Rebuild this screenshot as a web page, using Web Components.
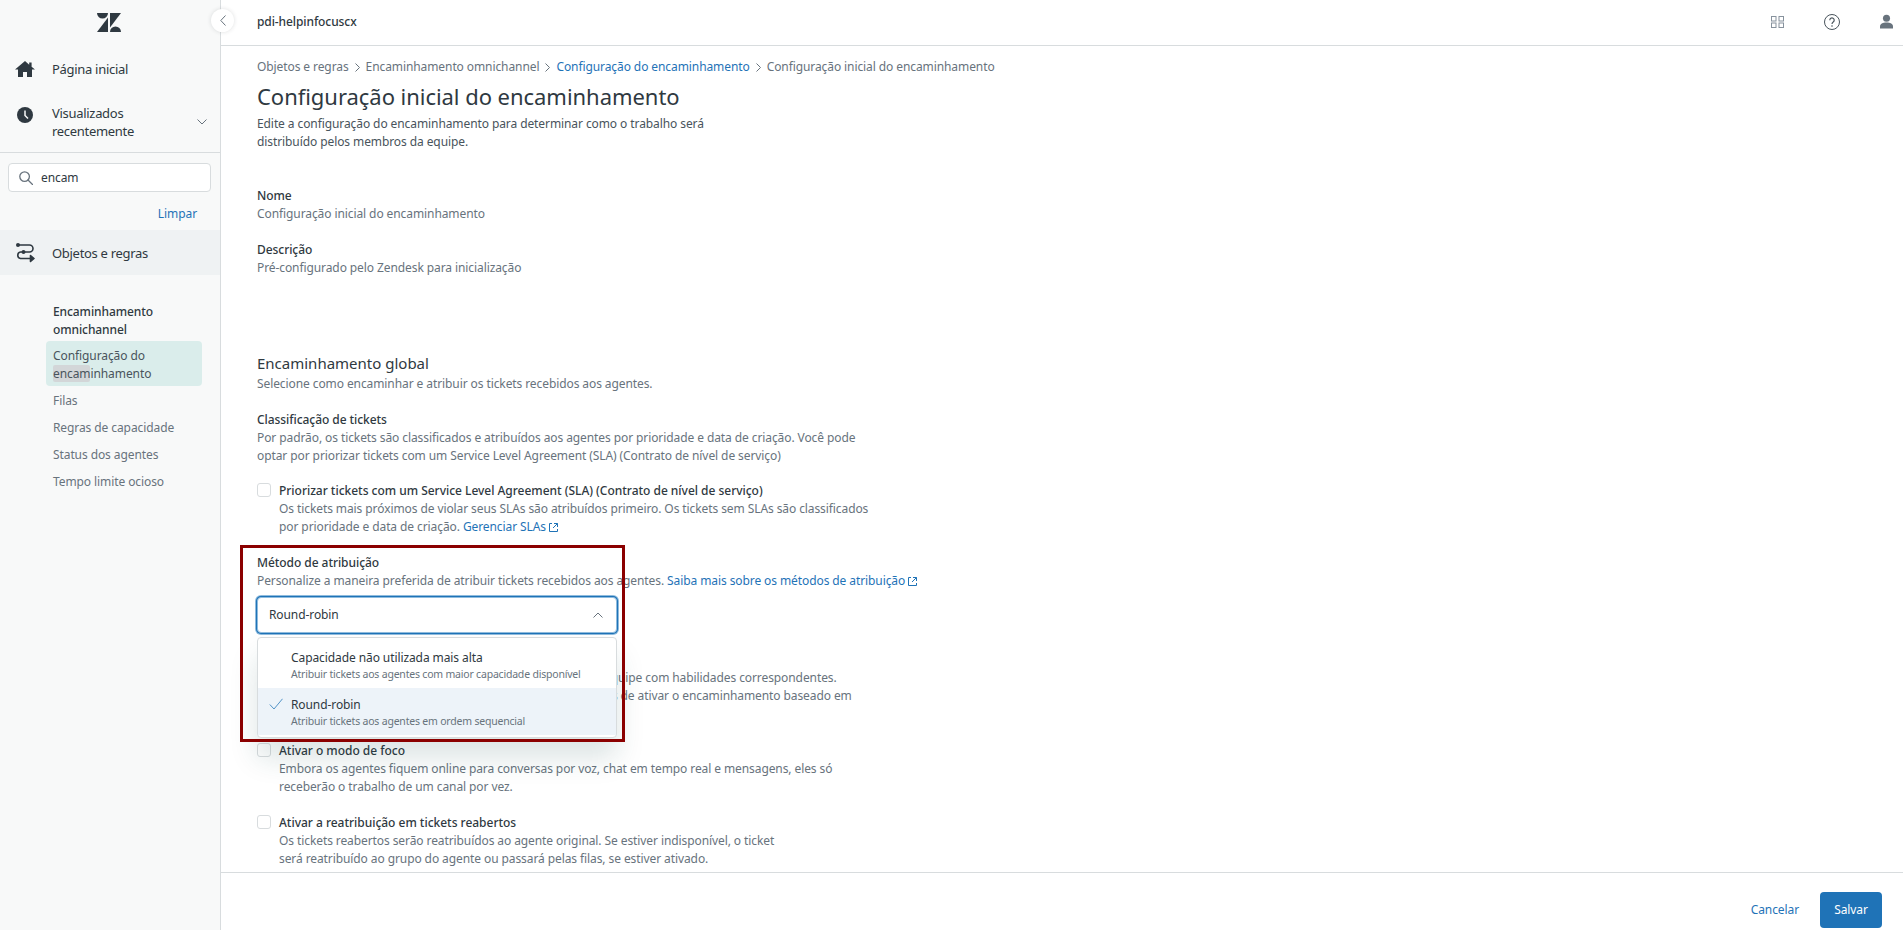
<!DOCTYPE html>
<html lang="pt-BR">
<head>
<meta charset="utf-8">
<title>Configuração inicial do encaminhamento</title>
<style>
  html, body { margin: 0; height: 100%; overflow: hidden; }
  body {
    font-family: "Noto Sans", "Open Sans", sans-serif;
    font-size: 12px;
    letter-spacing: -0.09px;
    line-height: 18px;
    color: #2f3941;
    background: #fff;
  }
</style>
</head>
<body>

<zd-app>
  <zd-sidebar slot="side"></zd-sidebar>
  <zd-header slot="top" account="pdi-helpinfocuscx"></zd-header>
  <zd-routing-page></zd-routing-page>
  <zd-footer slot="bottom"></zd-footer>
</zd-app>

<script>
// helper pra não repetir attachShadow em todo componente
class ZdBase extends HTMLElement {
  constructor() {
    super();
    this.attachShadow({ mode: 'open' });
  }
  connectedCallback() {
    this.shadowRoot.innerHTML = this.markup();
  }
}

class ZdApp extends ZdBase {
  markup() {
    return `
      <style>
        :host { display: grid; grid-template-columns: 221px 1fr; grid-template-rows: 46px 826px 58px; height: 930px; }
        .side { grid-row: 1 / 4; display: block; min-height: 0; position: relative; z-index: 5; }
        .body { display: block; overflow: hidden; min-height: 0; }
      </style>
      <div class="side"><slot name="side"></slot></div>
      <slot name="top"></slot>
      <div class="body"><slot></slot></div>
      <slot name="bottom"></slot>`;
  }
}

class ZdSidebar extends ZdBase {
  markup() {
    return `
      <style>
        :host { display: block; height: 930px; background: #f8f9f9; border-right: 1px solid #d8dcde; box-sizing: border-box; position: relative; font-size: 12px; }
        .logo { display: flex; justify-content: center; padding-top: 13px; height: 47px; box-sizing: border-box; padding-right: 3px; }
        .nav { display: flex; align-items: center; height: 44px; padding-left: 15px; gap: 17px; font-size: 13px; letter-spacing: -0.3px; }
        .nav svg { flex: none; width: 20px; }
        .recent { box-sizing: border-box; height: 49px; margin-top: 13px; border-bottom: 1px solid #d8dcde; align-items: flex-start; }
        .recent .txt { width: 120px; }
        .recent .icon { margin-top: 3px; }
        .recent .chev { width: 10px; margin: 15px 0 0 8px; }
        .search { margin: 10px 9px 0 8px; height: 29px; background: #fff; border: 1px solid #d8dcde; border-radius: 4px; box-sizing: border-box; display: flex; align-items: center; padding-left: 10px; gap: 8px; }
        .search svg { width: 14px; height: 14px; flex: none; }
        .clear { text-align: right; padding-right: 23px; margin-top: 13px; height: 25px; color: #1f73b7; }
        .rules { background: #eff2f3; height: 45px; }
        .sub { padding: 28px 18px 0 46px; }
        .group { padding-left: 7px; font-weight: 500; color: #2f3941; margin-bottom: 2px; }
        .item { padding-left: 7px; color: #68737d; height: 27px; line-height: 27px; }
        .item.active { background: #daedeb; border-radius: 4px; color: #49545c; height: 45px; line-height: 18px; padding-top: 6px; box-sizing: border-box; margin-bottom: 1px; width: 156px; }
        mark { background: #d3d6d8; color: inherit; border-radius: 2px; }
        .collapse { position: absolute; left: 211px; top: 9px; width: 23px; height: 23px; border-radius: 50%; background: #fff; box-shadow: 0 0 4px rgba(47,57,65,.16); display: flex; align-items: center; justify-content: center; }
      </style>
      <div class="logo">
        <svg width="24" height="19" viewBox="0 0 24 19" fill="#2f3941"><path d="M0 0H11A5.5 5.5 0 0 1 0 0Z"/><path d="M11 4.6V19H0Z"/><path d="M13 14.4V0H24Z"/><path d="M13 19A5.5 5.5 0 0 1 24 19Z"/></svg>
      </div>
      <div class="nav home">
        <svg height="16" viewBox="0 0 20 16" fill="#2f3941"><path d="M10 0L0 8.6h3V16h5v-5h4v5h5V8.6h3L16.6 5.7V1.4h-2.4v2.3Z"/></svg>
        <span>Página inicial</span>
      </div>
      <div class="nav recent">
        <svg class="icon" height="16" viewBox="0 0 20 16"><circle cx="10" cy="8" r="8" fill="#2f3941"/><path d="M10 3.5V8.5L13 11.5" fill="none" stroke="#f8f9f9" stroke-width="1.5"/></svg>
        <span class="txt">Visualizados recentemente</span>
        <svg class="chev" height="6" viewBox="0 0 10 6"><path d="M.5.5L5 5 9.5.5" fill="none" stroke="#68737d"/></svg>
      </div>
      <div class="search">
        <svg viewBox="0 0 14 14" fill="none" stroke="#68737d" stroke-width="1.3"><circle cx="5.6" cy="5.6" r="4.8"/><path d="M9 9l4.5 4.5" stroke-linecap="round"/></svg>
        <span>encam</span>
      </div>
      <div class="clear">Limpar</div>
      <div class="nav rules">
        <svg height="21" viewBox="0 0 20 21" fill="none" stroke="#2f3941" stroke-width="1.6"><path d="M3 3H14.500a3.500 3.500 0 0 1 0 7H5.500a3.300 3.300 0 0 0 0 6.500H18"/><circle cx="3" cy="3" r="2" fill="#2f3941" stroke="none"/><circle cx="8.500" cy="10" r="2" fill="#2f3941" stroke="none"/><path d="M15.500 13.500L19 16.500 15.500 19.500Z" fill="#2f3941" stroke-linejoin="round"/></svg>
        <span>Objetos e regras</span>
      </div>
      <div class="sub">
        <div class="group">Encaminhamento omnichannel</div>
        <div class="item active">Configuração do <mark>encam</mark>inhamento</div>
        <div class="item">Filas</div>
        <div class="item">Regras de capacidade</div>
        <div class="item">Status dos agentes</div>
        <div class="item">Tempo limite ocioso</div>
      </div>
      <div class="collapse">
        <svg width="6" height="11" viewBox="0 0 6 11"><path d="M5.500.5L.8 5.500l4.700 5" fill="none" stroke="#68737d"/></svg>
      </div>`;
  }
}

class ZdHeader extends ZdBase {
  markup() {
    return `
      <style>
        :host { display: flex; align-items: center; height: 46px; border-bottom: 1px solid #d8dcde; box-sizing: border-box; padding: 0 0 2px 36px; }
        .name { font-weight: 500; flex: 1; color: #2f3941; }
        .icons { display: flex; align-items: center; padding-right: 10px; gap: 40px; }
      </style>
      <span class="name">${this.getAttribute('account')}</span>
      <div class="icons">
        <svg width="13" height="12" viewBox="0 0 13 12" fill="none" stroke="#87929d"><rect x=".5" y=".5" width="4.500" height="4.500"/><rect x="8" y=".5" width="4.500" height="4.500"/><rect x=".5" y="7" width="4.500" height="4.500"/><rect x="8" y="7" width="4.500" height="4.500"/></svg>
        <svg width="16" height="16" viewBox="0 0 16 16" fill="none" stroke="#49545c"><circle cx="8" cy="8" r="7.500"/><path d="M5.800 6.200a2.200 2.200 0 1 1 3.400 1.800C8.400 8.600 8 9 8 10" stroke-width="1.200"/><circle cx="8" cy="12" r=".8" fill="#49545c" stroke="none"/></svg>
        <svg width="13" height="15" viewBox="0 0 14 15" fill="#68737d"><circle cx="7" cy="4" r="3.800"/><path d="M0 15v-2.500C0 10 3 8.500 7 8.500s7 1.500 7 4V15Z"/></svg>
      </div>`;
  }
}

class ZdFooter extends ZdBase {
  markup() {
    return `
      <style>
        :host { display: flex; align-items: center; justify-content: flex-end; height: 58px; border-top: 1px solid #d8dcde; box-sizing: border-box; padding: 16px 21px 0 0; gap: 21px; }
        .cancel { color: #1f73b7; }
        .save { width: 62px; height: 36px; background: #1f73b7; color: #fff; border-radius: 4px; display: flex; align-items: center; justify-content: center; }
      </style>
      <span class="cancel">Cancelar</span>
      <span class="save">Salvar</span>`;
  }
}

class ZdExternalLink extends ZdBase {
  markup() {
    return `
      <style>
        :host { display: inline; color: #1f73b7; }
        svg { vertical-align: -1px; margin-left: 3px; }
      </style>
      <slot></slot><svg width="9" height="9" viewBox="0 0 9 9" fill="none" stroke="#1f73b7"><path d="M3 .5H.5v8h8V6M5 .5h3.500V4M8.500.5L4 5"/></svg>`;
  }
}

class ZdCheck extends ZdBase {
  markup() {
    return `
      <style>
        :host { display: grid; grid-template-columns: 14px 1fr; column-gap: 8px; }
        .box { width: 14px; height: 14px; border: 1px solid #d8dcde; border-radius: 3px; background: #fff; box-sizing: border-box; margin-top: 1px; }
        .title { font-weight: 500; letter-spacing: -0.02px; color: #2f3941; }
        .hint { grid-column: 2; color: #68737d; }
      </style>
      <span class="box"></span>
      <span class="title">${this.getAttribute('label')}</span>
      <div class="hint"><slot></slot></div>`;
  }
}

class ZdOption extends ZdBase {
  markup() {
    const selected = this.hasAttribute('selected');
    return `
      <style>
        :host { display: block; position: relative; padding: 8px 12px 0 33px; height: 47px; box-sizing: border-box; background: ${selected ? '#edf3f9' : '#fff'}; color: #2f3941; }
        .title { line-height: 18px; }
        .sub { color: #68737d; font-size: 10.5px; line-height: 16px; letter-spacing: -0.2px; margin-top: -1px; }
        svg { position: absolute; left: 11px; top: 10px; }
      </style>
      ${selected ? '<svg width="14" height="12" viewBox="0 0 14 12" fill="none" stroke="#5293c7" stroke-width="1"><path d="M.8 6.500L5 11 13.500.8"/></svg>' : ''}
      <div class="title">${this.getAttribute('label')}</div>
      <div class="sub">${this.getAttribute('hint')}</div>`;
  }
}

// select aberto: a lista fica por cima do conteúdo
class ZdSelect extends ZdBase {
  markup() {
    return `
      <style>
        :host { display: block; position: relative; width: 363px; padding: 2px 0 1px; }
        .field { height: 36px; width: 360px; margin-left: 2px; box-sizing: border-box; border: 1px solid #8fbbdd; border-radius: 4px; box-shadow: 0 0 0 1px #1f73b7, 0 0 0 2px #8fbbdd; display: flex; align-items: center; justify-content: space-between; padding: 0 13px 0 11px; background: #fff; }
        .list { position: absolute; left: 2px; top: 42px; width: 360px; height: 101px; box-sizing: border-box; background: #fff; border: 1px solid #d8dcde; border-radius: 4px; padding: 3px 0; box-shadow: 0 20px 28px rgba(23,73,77,.15); z-index: 3; }
      </style>
      <div class="field">
        <span>${this.getAttribute('value')}</span>
        <svg width="10" height="6" viewBox="0 0 10 6"><path d="M.5 5.500L5 1l4.500 4.500" fill="none" stroke="#68737d"/></svg>
      </div>
      <div class="list"><slot></slot></div>`;
  }
}

// retângulo vermelho de destaque em volta do método de atribuição
class ZdHighlight extends ZdBase {
  markup() {
    return `
      <style>
        :host { display: block; position: relative; }
        .frame { position: absolute; left: -17px; top: -9px; width: 385px; height: 197px; box-sizing: border-box; border: 3px solid #8b0000; z-index: 4; pointer-events: none; }
      </style>
      <slot></slot>
      <div class="frame"></div>`;
  }
}

class ZdRoutingPage extends ZdBase {
  markup() {
    return `
      <style>
        :host { display: block; padding: 12px 0 0 36px; }
        .crumbs { display: flex; gap: 6px; align-items: center; color: #68737d; }
        .crumbs svg { flex: none; }
        .crumbs .link { color: #1f73b7; }
        h1 { font-size: 22px; font-weight: 400; line-height: 28px; margin: 6px 0 0; color: #2f3941; letter-spacing: -0.04px; }
        .lead { margin-top: 5px; color: #49545c; }
        .label { font-weight: 500; letter-spacing: -0.06px; }
        .value { color: #68737d; }
        h2 { font-size: 15px; font-weight: 400; line-height: 20px; margin: 76px 0 0; letter-spacing: 0; }
        .muted { color: #68737d; }
        .behind { margin-top: 35px; color: #68737d; height: 36px; }
        .behind div { white-space: nowrap; }
      </style>
      <nav class="crumbs">
        <span>Objetos e regras</span>${this.sep()}
        <span>Encaminhamento omnichannel</span>${this.sep()}
        <span class="link">Configuração do encaminhamento</span>${this.sep()}
        <span>Configuração inicial do encaminhamento</span>
      </nav>
      <h1>Configuração inicial do encaminhamento</h1>
      <div class="lead">Edite a configuração do encaminhamento para determinar como o trabalho será<br>distribuído pelos membros da equipe.</div>

      <div class="label" style="margin-top:36px">Nome</div>
      <div class="value">Configuração inicial do encaminhamento</div>
      <div class="label" style="margin-top:18px">Descrição</div>
      <div class="value">Pré-configurado pelo Zendesk para inicialização</div>

      <h2>Encaminhamento global</h2>
      <div class="muted" style="margin-top:2px">Selecione como encaminhar e atribuir os tickets recebidos aos agentes.</div>

      <div class="label" style="margin-top:18px">Classificação de tickets</div>
      <div class="muted">Por padrão, os tickets são classificados e atribuídos aos agentes por prioridade e data de criação. Você pode<br>optar por priorizar tickets com um Service Level Agreement (SLA) (Contrato de nível de serviço)</div>

      <zd-check style="margin-top:17px" label="Priorizar tickets com um Service Level Agreement (SLA) (Contrato de nível de serviço)">
        Os tickets mais próximos de violar seus SLAs são atribuídos primeiro. Os tickets sem SLAs são classificados<br>por prioridade e data de criação. <zd-external-link>Gerenciar SLAs</zd-external-link>
      </zd-check>

      <zd-highlight style="margin-top:18px">
        <div class="label">Método de atribuição</div>
        <div class="muted">Personalize a maneira preferida de atribuir tickets recebidos aos agentes. <zd-external-link>Saiba mais sobre os métodos de atribuição</zd-external-link></div>
        <zd-select value="Round-robin" style="margin:5px 0 0 -2px">
          <zd-option label="Capacidade não utilizada mais alta" hint="Atribuir tickets aos agentes com maior capacidade disponível"></zd-option>
          <zd-option selected label="Round-robin" hint="Atribuir tickets aos agentes em ordem sequencial"></zd-option>
        </zd-select>
      </zd-highlight>

      <div class="behind">
        <div style="padding-left:347px">equipe com habilidades correspondentes.</div>
        <div style="padding-left:330px">antes de ativar o encaminhamento baseado em</div>
      </div>

      <zd-check style="margin-top:37px" label="Ativar o modo de foco">
        Embora os agentes fiquem online para conversas por voz, chat em tempo real e mensagens, eles só<br>receberão o trabalho de um canal por vez.
      </zd-check>
      <zd-check style="margin-top:18px" label="Ativar a reatribuição em tickets reabertos">
        Os tickets reabertos serão reatribuídos ao agente original. Se estiver indisponível, o ticket<br>será reatribuído ao grupo do agente ou passará pelas filas, se estiver ativado.
      </zd-check>`;
  }
  sep() {
    return '<svg width="5" height="9" viewBox="0 0 5 9"><path d="M.5.5l4 4-4 4" fill="none" stroke="#68737d"/></svg>';
  }
}

customElements.define('zd-app', ZdApp);
customElements.define('zd-sidebar', ZdSidebar);
customElements.define('zd-header', ZdHeader);
customElements.define('zd-footer', ZdFooter);
customElements.define('zd-external-link', ZdExternalLink);
customElements.define('zd-check', ZdCheck);
customElements.define('zd-option', ZdOption);
customElements.define('zd-select', ZdSelect);
customElements.define('zd-highlight', ZdHighlight);
customElements.define('zd-routing-page', ZdRoutingPage);
</script>
</body>
</html>
